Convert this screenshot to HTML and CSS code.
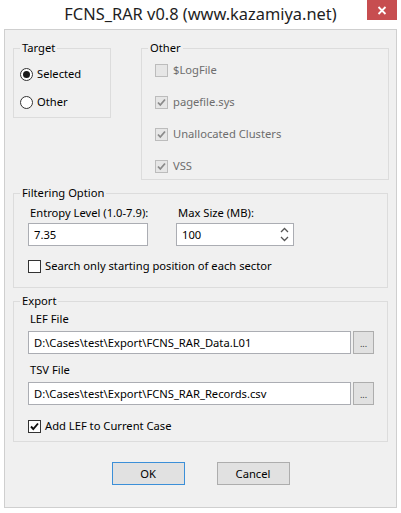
FILE: index.html
```html
<!DOCTYPE html>
<html>
<head>
<meta charset="utf-8">
<link rel="stylesheet" href="styles.css">
</head>
<body>
<div class="window">
  <div class="titlebar">
    <div class="title">FCNS_RAR v0.8 (www.kazamiya.net)</div>
    <div class="close"><svg width="10" height="9" viewBox="0 0 10 9"><path d="M1.5 1 L8.5 8 M8.5 1 L1.5 8" stroke="#fff" stroke-width="1.8" fill="none"/></svg></div>
  </div>
  <div class="client">
    <div class="toprow">
      <fieldset class="group target">
        <legend>Target</legend>
        <div class="body target-body">
          <div class="opt"><span class="radio on"></span><span>Selected</span></div>
          <div class="opt"><span class="radio"></span><span>Other</span></div>
        </div>
      </fieldset>
      <fieldset class="group other">
        <legend>Other</legend>
        <div class="body other-body">
          <div class="opt dis"><span class="check"></span><span>$LogFile</span></div>
          <div class="opt dis"><span class="check"><svg width="11" height="11" viewBox="0 0 11 11"><path d="M2 5.5 L4.3 8 L9 2.5" stroke="#8a8a8a" stroke-width="1.8" fill="none"/></svg></span><span>pagefile.sys</span></div>
          <div class="opt dis"><span class="check"><svg width="11" height="11" viewBox="0 0 11 11"><path d="M2 5.5 L4.3 8 L9 2.5" stroke="#8a8a8a" stroke-width="1.8" fill="none"/></svg></span><span>Unallocated Clusters</span></div>
          <div class="opt dis"><span class="check"><svg width="11" height="11" viewBox="0 0 11 11"><path d="M2 5.5 L4.3 8 L9 2.5" stroke="#8a8a8a" stroke-width="1.8" fill="none"/></svg></span><span>VSS</span></div>
        </div>
      </fieldset>
    </div>

    <fieldset class="group wide filtering">
      <legend>Filtering Option</legend>
      <div class="body filter-body">
        <div class="fields">
          <div class="field entropy">
            <div class="lbl">Entropy Level (1.0-7.9):</div>
            <div class="input">7.35</div>
          </div>
          <div class="field maxsize">
            <div class="lbl">Max Size (MB):</div>
            <div class="input spin"><span>100</span><svg class="arrows" width="9" height="15" viewBox="0 0 9 15"><path d="M1 5 L4.5 1.5 L8 5" stroke="#555" stroke-width="1.3" fill="none"/><path d="M1 10 L4.5 13.5 L8 10" stroke="#555" stroke-width="1.3" fill="none"/></svg></div>
          </div>
        </div>
        <div class="opt search"><span class="check en"></span><span>Search only starting position of each sector</span></div>
      </div>
    </fieldset>

    <fieldset class="group wide export">
      <legend>Export</legend>
      <div class="body export-body">
        <div class="lbl">LEF File</div>
        <div class="filerow">
          <div class="input path">D:\Cases\test\Export\FCNS_RAR_Data.L01</div>
          <div class="browse">...</div>
        </div>
        <div class="lbl tsv">TSV File</div>
        <div class="filerow">
          <div class="input path">D:\Cases\test\Export\FCNS_RAR_Records.csv</div>
          <div class="browse">...</div>
        </div>
        <div class="opt addlef"><span class="check en"><svg width="11" height="11" viewBox="0 0 11 11"><path d="M2 5.5 L4.3 8 L9 2.5" stroke="#111" stroke-width="1.9" fill="none"/></svg></span><span>Add LEF to Current Case</span></div>
      </div>
    </fieldset>

    <div class="buttons">
      <div class="btn default">OK</div>
      <div class="btn">Cancel</div>
    </div>
  </div>
</div>
</body>
</html>
```

FILE: styles.css
```css
* { box-sizing: border-box; }
html, body { margin: 0; padding: 0; background: #ffffff; }
body {
  font-family: "Noto Sans", "Open Sans", sans-serif;
  font-size: 11.2px;
  color: #000;
}
.window {
  width: 401px;
  height: 513px;
  background: #ffffff;
  overflow: hidden;
}
.titlebar {
  height: 29px;
  display: grid;
  grid-template-columns: 1fr auto 1fr;
  align-items: start;
}
.title {
  grid-column: 2;
  font-size: 16.4px;
  line-height: 20px;
  padding-top: 4px;
  color: #1e1e1e;
  white-space: nowrap;
}
.close {
  grid-column: 3;
  justify-self: end;
  margin-right: 4px;
  width: 30px;
  height: 20px;
  background: #c74e50;
  display: flex;
  align-items: center;
  justify-content: center;
}
.client {
  margin-left: 4px;
  width: 393px;
  height: 479px;
  border: 1px solid #cfcfcf;
  background: #f0f0f0;
  padding: 10px 0 0 8px;
}
.toprow {
  display: flex;
  align-items: flex-start;
  gap: 30px;
}
.group {
  margin: 0;
  padding: 0;
  border: 1px solid #dcdcdc;
  min-inline-size: 0;
}
.group legend {
  margin-left: 6px;
  padding: 0 2px;
  font-size: 11.2px;
  line-height: 16px;
}
.target { width: 98px; }
.other { width: 248px; }
.wide { width: 375px; margin-top: 5px; }

.body { display: flex; flex-direction: column; }
.opt {
  display: flex;
  align-items: center;
  height: 16px;
  line-height: 16px;
  white-space: nowrap;
}
.target-body { padding: 10px 0 7px 6px; gap: 12px; }
.target-body .opt { gap: 4px; }
.other-body { padding: 6px 0 5px 13px; gap: 16px; }
.other-body .opt { gap: 5px; }
.dis { color: #6d6d6d; }

.radio {
  width: 13px;
  height: 13px;
  border: 1px solid #333;
  border-radius: 50%;
  background: #fff;
  display: flex;
  align-items: center;
  justify-content: center;
  flex: none;
}
.radio.on::after {
  content: "";
  width: 7px;
  height: 7px;
  border-radius: 50%;
  background: #1a1a1a;
}
.check {
  width: 13px;
  height: 13px;
  border: 1px solid #bcbcbc;
  background: #e6e6e6;
  display: flex;
  align-items: center;
  justify-content: center;
  flex: none;
}
.check.en { border-color: #333; background: #fff; }

.filter-body { padding: 4px 0 13px 14px; }
.fields { display: flex; gap: 28px; }
.field { display: flex; flex-direction: column; gap: 2px; }
.entropy { width: 120px; }
.maxsize { width: 118px; }
.lbl { line-height: 16px; height: 16px; padding-left: 2px; white-space: nowrap; }
.input {
  height: 23px;
  border: 1px solid #abadb3;
  background: #fff;
  padding: 0 5px;
  display: flex;
  align-items: center;
  white-space: nowrap;
}
.entropy .input { width: 120px; }
.maxsize .input { width: 118px; }
.spin { justify-content: space-between; padding-right: 4px; }
.search { margin-top: 12px; gap: 4px; }

.export-body { padding: 2px 0 7px 14px; }
.export-body .lbl { margin-bottom: 4px; }
.export-body .tsv { margin-top: 8px; }
.filerow { display: flex; gap: 2px; }
.path { width: 323px; }
.browse {
  width: 21px;
  height: 23px;
  border: 1px solid #adadad;
  background: #e1e1e1;
  font-size: 9px;
  line-height: 9px;
  display: flex;
  align-items: flex-end;
  justify-content: center;
  padding-bottom: 5px;
  color: #333;
}
.addlef { margin-top: 13px; gap: 4px; }

.buttons {
  display: flex;
  justify-content: center;
  gap: 32px;
  margin-top: 20px;
  padding-right: 8px;
}
.btn {
  width: 73px;
  height: 23px;
  border: 1px solid #adadad;
  background: #e1e1e1;
  display: flex;
  align-items: center;
  justify-content: center;
}
.btn.default { border-color: #3b8fd8; }
```
